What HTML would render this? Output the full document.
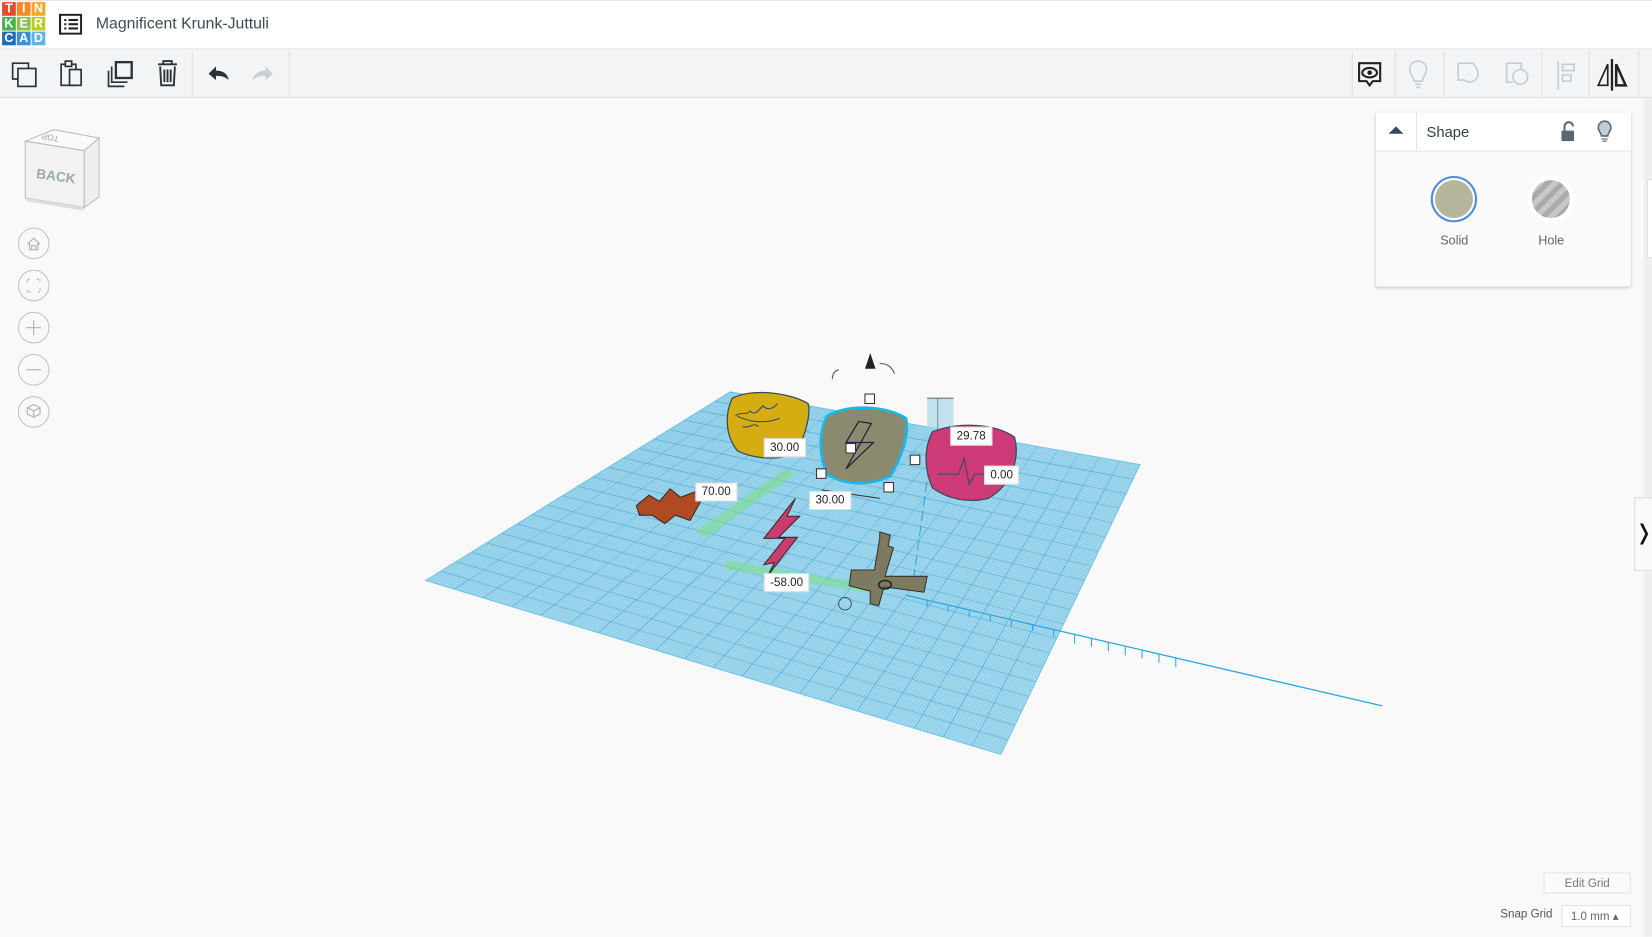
<!DOCTYPE html>
<html><head><meta charset="utf-8"><style>
html,body{margin:0;padding:0;width:1652px;height:936px;overflow:hidden;background:#f9f9f9;font-family:"Liberation Sans",sans-serif}
#s{position:absolute;left:0;top:0;width:1568px;height:888.4px;transform:scale(1.05357);transform-origin:0 0}
.abs{position:absolute}
.top{left:0;top:0;width:1568px;height:47px;background:#fff;border-bottom:1px solid #dde1e5;border-top:1px solid #e6e6e6;box-sizing:border-box}
.tb{left:0;top:48px;width:1568px;height:45px;background:#f3f4f6;border-bottom:1px solid #dde1e5;box-sizing:border-box}
.logo{left:2px;top:2px;width:41px;height:41px;display:grid;grid-template-columns:repeat(3,13px);grid-gap:1px}
.logo div{color:#fff;font-size:12px;font-weight:bold;text-align:center;line-height:13px}
.sep{width:1px;background:#dde1e5;top:48px;height:45px}
.panel{left:1306px;top:107px;width:242px;height:165px;background:#fafafa;box-shadow:0 1px 3px rgba(0,0,0,.2);border-radius:2px}
.ph{height:36px;background:#fff;border-bottom:1px solid #e3e5e8;position:relative}
.nav{left:17px;width:30px;height:30px;border:1px solid #bfc3c8;border-radius:50%;box-sizing:border-box;background:#f9f9f9}
.lbl{position:absolute;background:#fff;font-size:11px;color:#222;padding:2px 5px;border:1px solid #ddd}
</style></head><body><div id="s">
<div class="abs top"></div>
<div class="abs logo">
<div style="background:#e8492b">T</div><div style="background:#f08a24">I</div><div style="background:#f5a623">N</div>
<div style="background:#4caf50">K</div><div style="background:#8bc34a">E</div><div style="background:#b8cc2c">R</div>
<div style="background:#1f6db5">C</div><div style="background:#3a8fd6">A</div><div style="background:#62b3e6">D</div>
</div>
<svg class="abs" style="left:56px;top:13px" width="22" height="20" viewBox="0 0 22 20"><rect x="1" y="1" width="20" height="18" fill="none" stroke="#222" stroke-width="2"/><g fill="#222"><rect x="5" y="5" width="2" height="2"/><rect x="9" y="5" width="9" height="2"/><rect x="5" y="9" width="2" height="2"/><rect x="9" y="9" width="9" height="2"/><rect x="5" y="13" width="2" height="2"/><rect x="9" y="13" width="9" height="2"/></g></svg>
<div class="abs" style="left:91px;top:14px;font-size:15px;color:#3d4a57">Magnificent Krunk-Juttuli</div>
<div class="abs tb"></div>
<div class="abs sep" style="left:182px"></div><div class="abs sep" style="left:274px"></div>
<div class="abs sep" style="left:1283px"></div><div class="abs sep" style="left:1324px"></div><div class="abs sep" style="left:1370px"></div><div class="abs sep" style="left:1463px"></div><div class="abs sep" style="left:1508px"></div><div class="abs sep" style="left:1555px"></div>
<svg class="abs" style="left:0;top:48px" width="1568" height="45" viewBox="0 0 1568 45">
<g fill="none" stroke="#2b3338" stroke-width="1.6">
<rect x="12" y="12" width="15" height="15"/><rect x="17" y="17" width="17" height="17" fill="#f3f4f6"/>
<rect x="58" y="13" width="14" height="20"/><rect x="62" y="10" width="6" height="5" fill="#f3f4f6"/><rect x="66" y="18" width="11" height="15" fill="#f3f4f6"/>
<rect x="110" y="11" width="15" height="15" stroke-width="2.2"/><path d="M106 15v15h15M103 19v15h15"/>
<path d="M150 13h18M155 13v-3h8v3M152 15l1 18h12l1-18M156 18v12M159 18v12M162 18v12" stroke-width="1.8"/>
</g>
<path d="M198 22l7-7v4c7 0 11 3 12 9c-3-3-6-4-12-4v4z" fill="#2b3338"/>
<path d="M259 22l-7-7v4c-7 0-11 3-12 9c3-3 6-4 12-4v4z" fill="#c7d0d8"/>
<path d="M1290 12h20v17h-7l-3 4-3-4h-7z" fill="none" stroke="#222" stroke-width="2"/><ellipse cx="1300" cy="21" rx="7" ry="4.5" fill="none" stroke="#222" stroke-width="2"/><circle cx="1300" cy="21" r="2.2" fill="#222"/>
<g fill="none" stroke="#c5ced6" stroke-width="1.6"><path d="M1342 29c0-4-4-6-4-11a8 8 0 0 1 16 0c0 5-4 7-4 11zM1343 32h6M1344 35h4"/>
<path d="M1384 12h14c3 4 5 6 5 10a8 8 0 0 1-13 6h-6z"/><path d="M1430 12h14v6M1430 12v18h6"/><circle cx="1443" cy="25" r="7"/>
<path d="M1479 10v27"/><rect x="1483" y="13" width="11" height="6"/><rect x="1483" y="23" width="8" height="6"/></g>
<path d="M1530 8v30" stroke="#222" stroke-width="2.2"/><path d="M1526 33h-9l9-20z" fill="none" stroke="#222" stroke-width="1.6"/><path d="M1534 13l9 20h-9z" fill="none" stroke="#222" stroke-width="2.4"/>
</svg>
<svg class="abs" style="left:16px;top:114px" width="85" height="90" viewBox="0 0 85 90">
<path d="M8 20l27-11 43 8-14 12z" fill="#fafafa" stroke="#bbb"/><path d="M8 20l56 9v54l-56-9z" fill="#f2f2f2" stroke="#bbb"/><path d="M64 29l14-12v56l-14 10z" fill="#eee" stroke="#bbb"/>
<path d="M9 74l55 9v3l-55-9z" fill="#ddd"/>
<text x="18" y="55" font-size="13" fill="#9aa" font-weight="bold" transform="rotate(8 18 55)">BACK</text>
<text x="50" y="18" font-size="8" fill="#9aa" transform="rotate(190 45 17)">TOP</text>
</svg>
<div class="abs nav" style="top:216px"></div><div class="abs nav" style="top:256px"></div><div class="abs nav" style="top:296px"></div><div class="abs nav" style="top:336px"></div><div class="abs nav" style="top:376px"></div>
<svg class="abs" style="left:17px;top:216px" width="30" height="190" viewBox="0 0 30 190" fill="none" stroke="#b3b8bd" stroke-width="1.2">
<path d="M9 16l6-6 6 6M11 14v7h8v-7M13 21v-4h4v4"/>
<path d="M9 52v-3h3M18 49h3v3M21 58v3h-3M12 61h-3v-3" stroke-dasharray="2 1"/>
<path d="M15 88v14M8 95h14"/><path d="M8 135h14"/>
<path d="M15 168l6 3v6l-6 3-6-3v-6zM9 171l6 3 6-3M15 174v6"/>
</svg>
<svg class="abs" style="left:0;top:0" width="1568" height="888" viewBox="0 0 1568 888">
<polygon points="404,551 693,372 1082,441 950,716" fill="#b3e1f2"/>
<g id="grid"></g>
<polygon points="404,551 693,372 1082,441 950,716" fill="none" stroke="#6ec2e4" stroke-width="1"/>
<path d="M860 565L1312 670" stroke="#2aa8df" stroke-width="1.2"/>
<g stroke="#2aa8df" stroke-width="1"><path d="M880 570v6M900 575v6M920 580v6M940 584v6M960 589v6M980 593v6M1000 598v6M1020 603v8M1036 606v8M1052 610v8M1068 614v8M1084 617v8M1100 621v8M1116 625v8"/></g>
<path d="M867 550L885 420" stroke="#2aa8df" stroke-dasharray="10 4"/>
<path d="M660 505l85-60 10 5-85 60z" fill="#7fe08a" opacity=".6"/>
<path d="M690 532l150 25-2 8-150-25z" fill="#7fe08a" opacity=".6"/>
<path d="M695 378c20-10 55-5 72 5 3 10-3 30-10 45-15 10-40 8-57 0-12-15-12-35-5-50z" fill="#d4ad10" stroke="#3a4a5a" stroke-width="1.2"/>
<path d="M700 395c10 5 25 8 40 2M705 405c8 2 10-5 15 0M698 395c5-5 10 0 14-5 4 5 8 0 12-5 4 5 10 3 14-2" stroke="#3a4a5a" fill="none"/>
<path d="M785 395c20-12 55-10 75 2 3 15-3 35-15 55-20 10-45 8-60-2-8-18-8-40 0-55z" fill="#8c8a6e" stroke="#1ab8e8" stroke-width="2.5"/>
<path d="M815 400l-12 20h14l-14 25 26-25h-12l10-18z" fill="none" stroke="#223" stroke-width="1.2"/>
<g fill="#fff" stroke="#333"><rect x="821" y="374" width="9" height="9"/><rect x="803" y="421" width="9" height="9"/><rect x="775" y="445" width="9" height="9"/><rect x="839" y="458" width="9" height="9"/><rect x="864" y="432" width="9" height="9"/></g>
<path d="M780 465l55 8M890 378v50M880 378h25" stroke="#333" fill="none"/>
<rect x="880" y="378" width="25" height="55" fill="#9fd2e6" opacity=".6"/>
<path d="M826 335l-5 15h10z" fill="#222"/><path d="M790 360c0-5 2-8 6-9M835 345c8 0 12 4 14 10" stroke="#555" fill="none"/>
<path d="M885 410c25-10 60-8 78 5 5 20-2 45-25 58-20 5-40 0-53-10-8-18-8-38 0-53z" fill="#cc3a78" stroke="#3a4a5a" stroke-width="1.2"/>
<path d="M890 450h20l5-15 5 25 5-10h30" stroke="#3a4a5a" fill="none"/>
<path d="M604 480l12-10 10 6 10-12 10 8 16-6 3 10-10 18-14-5-10 8-12-8-12 0z" fill="#b04a25" stroke="#3a2a22"/>
<path d="M755 473l-30 38h20l-20 25 10-2-6 12 28-36h-18l20-20h-12z" fill="#c83d6e" stroke="#3a2a32"/>
<path d="M835 505l10 3-2 10 5 2-8 27 40 0-3 15-38-5-5 18-8-2 0-12-20-5 2-15 22 0 5-30z" fill="#7d7a5f" stroke="#333"/>
<ellipse cx="840" cy="555" rx="6" ry="4" fill="none" stroke="#222" stroke-width="1.5"/>
<circle cx="802" cy="573" r="6" fill="none" stroke="#555"/>
</svg>
<div class="lbl" style="left:725px;top:416px">30.00</div>
<div class="lbl" style="left:660px;top:458px">70.00</div>
<div class="lbl" style="left:768px;top:466px">30.00</div>
<div class="lbl" style="left:902px;top:405px">29.78</div>
<div class="lbl" style="left:934px;top:442px">0.00</div>
<div class="lbl" style="left:725px;top:544px">-58.00</div>
<div class="abs panel"><div class="ph">
<div class="abs" style="left:38px;top:0;width:1px;height:36px;background:#e3e5e8"></div>
<svg class="abs" style="left:11px;top:11px" width="16" height="12"><path d="M1 9l7-7 7 7z" fill="#34495e"/></svg>
<div class="abs" style="left:48px;top:10px;font-size:14px;color:#323f4b">Shape</div>
<svg class="abs" style="left:176px;top:6px" width="60" height="24"><path d="M3 11v-4a4 4 0 0 1 8 0" fill="none" stroke="#5a6772" stroke-width="2"/><rect x="0" y="11" width="12" height="10" rx="1" fill="#5a6772"/><path d="M38 16c0-3-3-4-3-8a6 6 0 0 1 12 0c0 4-3 5-3 8z" fill="#c3cbd3" stroke="#5a6772" stroke-width="1.5"/><path d="M38 19h6M39 21h4" stroke="#5a6772"/></svg>
</div>
<div class="abs" style="left:52px;top:60px;width:44px;height:44px;border-radius:50%;border:2px solid #4a8fdf;box-sizing:border-box;background:#fff"><div style="margin:2px;width:36px;height:36px;border-radius:50%;background:#b4b59a"></div></div>
<div class="abs" style="left:144px;top:60px;width:44px;height:44px;border-radius:50%;background:#fff"><div style="margin:4px;width:36px;height:36px;border-radius:50%;background:repeating-linear-gradient(135deg,#aaa 0 5px,#c8c8c8 5px 10px)"></div></div>
<div class="abs" style="left:61px;top:114px;font-size:12px;color:#666">Solid</div>
<div class="abs" style="left:154px;top:114px;font-size:12px;color:#666">Hole</div>
</div>
<div class="abs" style="left:1560px;top:93px;width:8px;height:796px;background:#efefef"></div>
<div class="abs" style="left:1563px;top:170px;width:5px;height:73px;border:1px solid #ddd;border-right:0;background:#fff"></div>
<div class="abs" style="left:1551px;top:472px;width:16px;height:68px;border:1px solid #ddd;background:#f9f9f9;font-size:20px;line-height:66px;text-align:center;color:#111">&#x276D;</div>
<div class="abs" style="left:1465px;top:828px;width:83px;height:20px;border:1px solid #e2e4e7;background:#fafafa;font-size:11px;color:#777;text-align:center;line-height:20px;box-sizing:border-box">Edit Grid</div>
<div class="abs" style="left:1424px;top:862px;font-size:11px;color:#555">Snap Grid</div>
<div class="abs" style="left:1482px;top:859px;width:66px;height:21px;border:1px solid #e2e4e7;background:#fff;font-size:11px;color:#666;line-height:21px;padding-left:8px;box-sizing:border-box">1.0 mm &#x25B4;</div>
</div>
<script>
(function(){var A=[404,551],B=[693,372],C=[1082,441],D=[950,716];var g=document.getElementById('grid');var s='';
function L(p,q,t){return [p[0]+(q[0]-p[0])*t,p[1]+(q[1]-p[1])*t];}
var N=200;for(var i=1;i<N;i++){var t=i/N,maj=i%10==0;var c=maj?'#5fb3da':'#86c9e6',w=maj?0.9:0.6;
var p=L(A,B,t),q=L(D,C,t);s+='<line x1="'+p[0]+'" y1="'+p[1]+'" x2="'+q[0]+'" y2="'+q[1]+'" stroke="'+c+'" stroke-width="'+w+'"/>';
p=L(A,D,t);q=L(B,C,t);s+='<line x1="'+p[0]+'" y1="'+p[1]+'" x2="'+q[0]+'" y2="'+q[1]+'" stroke="'+c+'" stroke-width="'+w+'"/>';}
g.innerHTML=s;})();
</script>
</body></html>
